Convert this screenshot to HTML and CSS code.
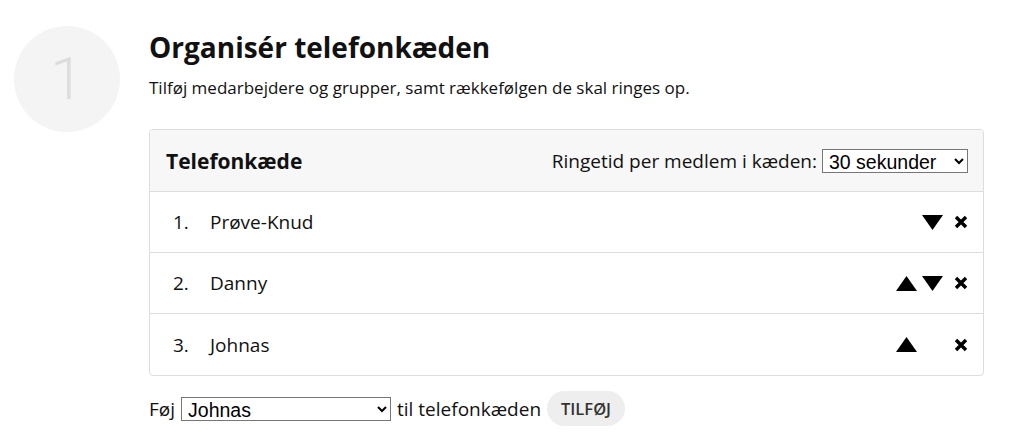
FILE: index.html
```html
<!DOCTYPE html>
<html lang="da">
<head>
<meta charset="utf-8">
<title>Telefonkæde</title>
<link rel="stylesheet" href="styles.css">
</head>
<body>
<div class="page">
  <div class="step"><span>1</span></div>
  <div class="main">
    <h1 class="title">Organisér telefonkæden</h1>
    <p class="lead">Tilføj medarbejdere og grupper, samt rækkefølgen de skal ringes op.</p>
    <div class="card">
      <div class="card-head">
        <h2 class="card-title">Telefonkæde</h2>
        <label class="ring">Ringetid per medlem i kæden:
          <select class="sel sel-time">
            <option>30 sekunder</option>
          </select>
        </label>
      </div>
      <ol class="chain">
        <li class="row">
          <span class="num">1.</span><span class="name">Prøve-Knud</span>
          <span class="actions">
            <span class="slot"></span>
            <svg class="tri" viewBox="0 0 21 15"><polygon points="0,0 21,0 10.5,15"/></svg>
            <svg class="x" viewBox="0 0 14 14"><path d="M2 2 L12 12 M12 2 L2 12"/></svg>
          </span>
        </li>
        <li class="row">
          <span class="num">2.</span><span class="name">Danny</span>
          <span class="actions">
            <svg class="tri" viewBox="0 0 21 15"><polygon points="0,15 21,15 10.5,0"/></svg>
            <svg class="tri" viewBox="0 0 21 15"><polygon points="0,0 21,0 10.5,15"/></svg>
            <svg class="x" viewBox="0 0 14 14"><path d="M2 2 L12 12 M12 2 L2 12"/></svg>
          </span>
        </li>
        <li class="row">
          <span class="num">3.</span><span class="name">Johnas</span>
          <span class="actions">
            <svg class="tri" viewBox="0 0 21 15"><polygon points="0,15 21,15 10.5,0"/></svg>
            <span class="slot"></span>
            <svg class="x" viewBox="0 0 14 14"><path d="M2 2 L12 12 M12 2 L2 12"/></svg>
          </span>
        </li>
      </ol>
    </div>
    <div class="add">
      <span>Føj</span>
      <select class="sel sel-person">
        <option>Johnas</option>
      </select>
      <span>til telefonkæden</span>
      <button class="btn" type="button">TILFØJ</button>
    </div>
  </div>
</div>
</body>
</html>
```

FILE: styles.css
```css
* { box-sizing: border-box; }
body {
  margin: 0;
  font-family: "Open Sans", "Noto Sans", sans-serif;
  color: #111;
  background: #fff;
}
.page {
  display: flex;
  gap: 29px;
  padding: 26px 0 0 14px;
}
.step {
  width: 106px;
  height: 106px;
  border-radius: 50%;
  background: #f4f4f4;
  display: flex;
  align-items: center;
  justify-content: center;
  flex: none;
}
.step span {
  font-family: Roboto, sans-serif;
  font-weight: 300;
  font-size: 60px;
  color: #dcdcdc;
  line-height: 1;
}
.main {
  width: 835px;
  padding-top: 4px;
}
.title {
  margin: 0;
  font-size: 28px;
  font-weight: 700;
  line-height: 34px;
}
.lead {
  margin: 12px 0 0;
  font-size: 17px;
  line-height: 24px;
}
.card {
  margin-top: 29px;
  border: 1px solid #dddddd;
  border-radius: 4px;
  overflow: hidden;
}
.card-head {
  height: 62px;
  background: #f7f7f7;
  border-bottom: 1px solid #dddddd;
  display: flex;
  align-items: center;
  justify-content: space-between;
  padding: 0 15px 0 16px;
}
.card-title {
  margin: 0;
  font-size: 21px;
  font-weight: 700;
}
.ring {
  font-size: 19px;
  display: flex;
  align-items: center;
  gap: 5px;
}
.sel {
  font-family: "Liberation Sans", Arial, sans-serif;
  font-size: 19.5px;
  height: 24px;
  border: 1px solid #767676;
  border-radius: 0;
  background: #fff;
  color: #000;
  padding: 0 2px;
}
.sel-time { width: 146px; }
.sel-person { width: 210px; }
.chain {
  list-style: none;
  margin: 0;
  padding: 0;
}
.row {
  height: 61px;
  display: flex;
  align-items: center;
  padding: 0 15px 0 23px;
  font-size: 19px;
  border-bottom: 1px solid #dddddd;
}
.row:last-child { border-bottom: 0; }
.num { width: 37px; }
.name { flex: 1; }
.actions {
  display: flex;
  align-items: center;
  gap: 5px;
}
.slot { width: 21px; height: 15px; }
.tri { width: 21px; height: 15px; fill: #000; }
.x {
  width: 14px;
  height: 14px;
  margin-left: 6px;
  stroke: #000;
  stroke-width: 3.4;
  fill: none;
}
.add {
  margin-top: 15px;
  display: flex;
  align-items: center;
  gap: 6px;
  font-size: 19px;
}
.btn {
  height: 35px;
  width: 78px;
  padding: 0;
  border: 0;
  border-radius: 18px;
  background: #eeeeee;
  color: #333;
  font-family: "Open Sans", sans-serif;
  font-weight: 600;
  font-size: 16.5px;
}
```
